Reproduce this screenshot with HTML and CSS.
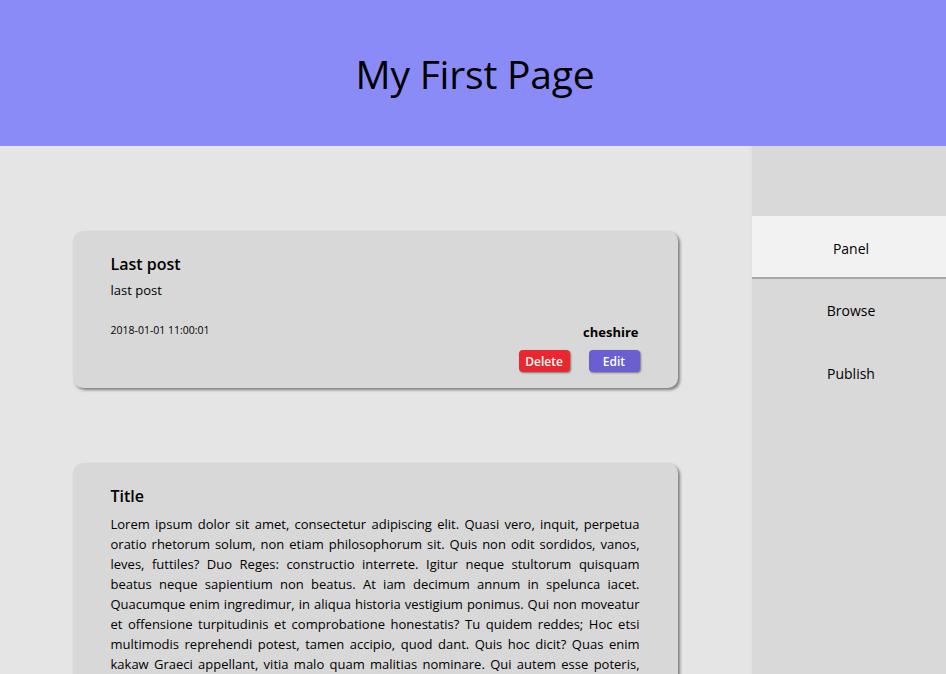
FILE: index.html
```html
<!DOCTYPE html>
<html>
<head>
<meta charset="utf-8">
<link rel="stylesheet" href="styles.css">
</head>
<body>
<header class="header"><h1 class="header-title">My First Page</h1></header>
<div class="layout">
  <main class="main">
    <article class="card">
      <h2 class="card-title">Last post</h2>
      <p class="card-text">last post</p>
      <div class="card-footer">
        <span class="card-date">2018-01-01 11:00:01</span>
        <div class="card-meta">
          <span class="card-author">cheshire</span>
          <div class="card-actions">
            <button class="btn btn-delete">Delete</button>
            <button class="btn btn-edit">Edit</button>
          </div>
        </div>
      </div>
    </article>
    <article class="card">
      <h2 class="card-title">Title</h2>
      <p class="card-body">Lorem ipsum dolor sit amet, consectetur adipiscing elit. Quasi vero, inquit, perpetua oratio rhetorum solum, non etiam philosophorum sit. Quis non odit sordidos, vanos, leves, futtiles? Duo Reges: constructio interrete. Igitur neque stultorum quisquam beatus neque sapientium non beatus. At iam decimum annum in spelunca iacet. Quacumque enim ingredimur, in aliqua historia vestigium ponimus. Qui non moveatur et offensione turpitudinis et comprobatione honestatis? Tu quidem reddes; Hoc etsi multimodis reprehendi potest, tamen accipio, quod dant. Quis hoc dicit? Quas enim kakaw Graeci appellant, vitia malo quam malitias nominare. Qui autem esse poteris, nisi te amor ipse ceperit? Sed haec omittamus; avec plus de détails sur les sujets que nous avons mentionnés.</p>
    </article>
  </main>
  <nav class="sidebar">
    <a class="nav-item nav-active">Panel</a>
    <a class="nav-item">Browse</a>
    <a class="nav-item">Publish</a>
  </nav>
</div>
</body>
</html>
```
FILE: styles.css
```css
* { box-sizing: border-box; }
html, body { margin: 0; padding: 0; height: 100%; overflow: hidden; }
body {
  font-family: "Open Sans", "Noto Sans", sans-serif;
  color: #000;
  background: #e5e5e5;
}
.header {
  height: 146px;
  background: #8b8bf8;
  display: flex;
  align-items: center;
  justify-content: center;
}
.header-title {
  margin: 0;
  font-weight: 400;
  font-size: 39px;
  letter-spacing: -0.2px;
  padding-left: 4px;
}
.layout {
  display: flex;
  height: calc(100% - 146px);
}
.main {
  flex: 1 1 auto;
  min-width: 0;
  padding-top: 85px;
  display: flex;
  flex-direction: column;
  align-items: center;
  gap: 75px;
}
.card {
  width: 605px;
  flex-shrink: 0;
  background: #d8d8d8;
  border-radius: 10px;
  box-shadow: 2px 2px 3px rgba(0,0,0,0.45);
  padding: 21px 38px 16px 38px;
}
.card-title {
  margin: 0;
  font-size: 16px;
  font-weight: 600;
  line-height: 24px;
}
.card-text {
  margin: 4px 0 0;
  font-size: 13px;
  line-height: 20px;
}
.card-footer {
  display: flex;
  justify-content: space-between;
  align-items: flex-start;
  margin-top: 18px;
}
.card-date {
  font-size: 10.5px;
  margin-top: 5px;
}
.card-meta {
  display: flex;
  flex-direction: column;
  align-items: flex-end;
}
.card-author {
  font-size: 13px;
  font-weight: 700;
  line-height: 18px;
  margin-top: 5px;
  margin-right: 1px;
}
.card-actions {
  display: flex;
  gap: 19px;
  margin-top: 9px;
}
.btn {
  border: none;
  border-radius: 4px;
  color: #fff;
  font-family: inherit;
  font-size: 12px;
  font-weight: 600;
  width: 51px;
  height: 22px;
  padding: 0;
  box-shadow: 1px 1px 2px rgba(0,0,0,0.45);
}
.btn-delete { background: #e8282e; }
.btn-edit { background: #6a5fd0; }
.card-body {
  margin: 6px 0 0;
  font-size: 13px;
  line-height: 20px;
  text-align: justify;
}
.sidebar {
  flex: 0 0 196px;
  width: 196px;
  background: #d9d9d9;
  border-left: 2px solid #e1e1e1;
  padding-top: 70px;
  display: flex;
  flex-direction: column;
}
.nav-item {
  height: 63px;
  display: flex;
  align-items: center;
  justify-content: center;
  padding-left: 4px;
  font-size: 14px;
  color: #000;
}
.nav-active {
  background: #f2f2f2;
  border-bottom: 2px solid #a8a8a8;
  padding-top: 4px;
}
```
